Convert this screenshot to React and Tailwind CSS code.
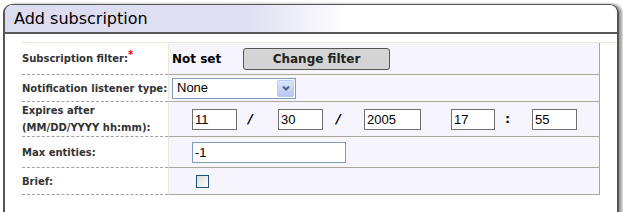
import React from 'react';

const Label = ({ children, h, req }) => (
    <div className={`flex items-center whitespace-nowrap border-b border-dashed border-[#a0a0a0] text-[10px] font-bold text-[#333] leading-[17px] ${h}`}>
        <span>
            {children}
            {req && <span className="relative -top-1 text-[#e00000] text-[10px]">*</span>}
        </span>
    </div>
);

const Value = ({ children, h, className = '' }) => (
    <div className={`flex items-center bg-[#f6f4fd] border-b border-r border-l border-b-[#aca899] border-r-[#aca899] border-l-[#ece9d8] ${h} ${className}`}>
        {children}
    </div>
);

const Box = ({ value, w }) => (
    <input
        readOnly
        value={value}
        className={`h-[21px] ${w} border border-[#707070] bg-white px-[2px] text-[13px] text-black outline-none`}
        style={{ fontFamily: '"Liberation Sans", Arial, sans-serif' }}
    />
);

export default function App() {
    return (
        <div className="w-[623px] h-[212px] bg-white pt-[4px] pl-[3px] overflow-hidden" style={{ fontFamily: '"DejaVu Sans", Verdana, sans-serif' }}>
            <div className="w-[616px] h-[230px] border-t-[1.5px] border-l-2 border-r-2 border-[#555] rounded-t-[9px] shadow-[3px_0_3px_#999]">
                {/* Title bar */}
                <div className="h-[29px] rounded-tl-[8px] rounded-tr-[8px] border-b-2 border-[#5a5a5a] bg-[linear-gradient(to_right,#dcdcef_0%,#e0e0f2_40%,#ffffff_56%)] pl-[9px] flex items-center">
                    <span className="text-[16px] text-black">Add subscription</span>
                </div>

                <div className="pt-[8px] pl-[17px]">
                    <div className="grid grid-cols-[146px_432px] border-t border-t-[#ece9d8]">
                        <Label h="h-[32px]" req>Subscription filter:</Label>
                        <Value h="h-[32px]" className="pl-[3px]">
                            <span className="whitespace-nowrap text-[12px] font-bold text-black w-[70px]">Not set</span>
                            <button className="ml-[1px] w-[147px] h-[22px] rounded-[3px] border border-[#555] bg-[#d4d4d4] text-[12px] font-bold text-[#222]">
                                Change filter
                            </button>
                        </Value>

                        <Label h="h-[27px]">Notification listener type:</Label>
                        <Value h="h-[27px]" className="pl-[3px]">
                            <div className="flex items-center h-[21px] w-[124px] border border-[#7f9db9] bg-white" style={{ fontFamily: '"Liberation Sans", Arial, sans-serif' }}>
                                <span className="flex-1 pl-[4px] text-[13px] text-black">None</span>
                                <span className="mr-[1px] w-[17px] h-[17px] rounded-[2px] bg-gradient-to-b from-[#dde6fb] to-[#b5c8f5] border border-[#b8caf5] flex items-center justify-center">
                                    <svg width="8" height="6" viewBox="0 0 8 6">
                                        <path d="M1 1.5 L4 4.5 L7 1.5" stroke="#4d6185" strokeWidth="2" fill="none" />
                                    </svg>
                                </span>
                            </div>
                        </Value>

                        <Label h="h-[35px]">
                            Expires after
                            <br />
                            (MM/DD/YYYY hh:mm):
                        </Label>
                        <Value h="h-[35px]" className="pl-[23px]">
                            <Box value="11" w="w-[45px]" />
                            <span className="w-[41px] pl-[11px] text-[13px] font-bold italic">/</span>
                            <Box value="30" w="w-[45px]" />
                            <span className="w-[41px] pl-[13px] text-[13px] font-bold italic">/</span>
                            <Box value="2005" w="w-[57px]" />
                            <span className="w-[30px]" />
                            <Box value="17" w="w-[44px]" />
                            <span className="w-[37px] pl-[10px] text-[13px] font-bold">:</span>
                            <Box value="55" w="w-[45px]" />
                        </Value>

                        <Label h="h-[31px]">Max entities:</Label>
                        <Value h="h-[31px]" className="pl-[23px]">
                            <input
                                readOnly
                                value="-1"
                                className="h-[21px] w-[154px] border border-[#7f9db9] bg-white px-[2px] text-[13px] text-black outline-none"
                                style={{ fontFamily: '"Liberation Sans", Arial, sans-serif' }}
                            />
                        </Value>

                        <Label h="h-[27px]">Brief:</Label>
                        <Value h="h-[27px]" className="pl-[27px]">
                            <span className="w-[13px] h-[13px] border border-[#1c5180] bg-gradient-to-br from-[#dcdcd7] to-white" />
                        </Value>
                    </div>
                </div>
            </div>
        </div>
    );
}
